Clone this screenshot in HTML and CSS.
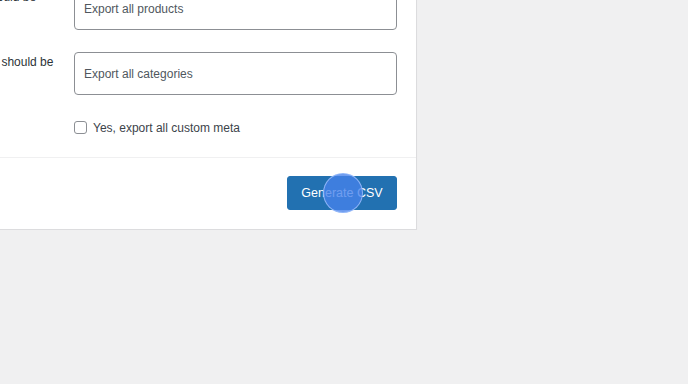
FILE: index.html
```html
<!DOCTYPE html>
<html lang="en">
<head>
<meta charset="utf-8">
<title>Export Products</title>
<link rel="stylesheet" href="styles.css">
</head>
<body>
<div class="card">
  <div class="form">
    <div class="row">
      <label class="label">Which product types should be exported?</label>
      <div class="field"><div class="select">Export all products</div></div>
    </div>
    <div class="row">
      <label class="label">Which product category should be exported?</label>
      <div class="field"><div class="select">Export all categories</div></div>
    </div>
    <div class="row row-check">
      <label class="label">Export custom meta?</label>
      <div class="field"><label class="check"><span class="box"></span>Yes, export all custom meta</label></div>
    </div>
  </div>
  <div class="footer">
    <div class="btn-wrap">
      <button class="button">Generate CSV</button>
      <span class="click"></span>
    </div>
  </div>
</div>
</body>
</html>
```

FILE: styles.css
```css
html, body {
  margin: 0;
  padding: 0;
  background: #f0f0f1;
  font-family: "Liberation Sans", Arial, sans-serif;
  color: #1d2327;
}
.card {
  background: #fff;
  margin-top: -13px;
  margin-left: -140px;
  width: 556px;
  border-right: 1px solid #dcdcde;
  border-bottom: 1px solid #dcdcde;
  box-shadow: 0 1px 1px rgba(0,0,0,0.04);
}
.form {
  padding: 0 19px 0 12px;
  display: flex;
  flex-direction: column;
}
.row {
  display: grid;
  grid-template-columns: 190px 1fr;
  column-gap: 12px;
  margin-bottom: 22px;
}
.row-check {
  margin-top: 3px;
  margin-bottom: 21px;
}
.label {
  font-size: 12px;
  line-height: 15.6px;
  padding-top: 3px;
  color: #2c3338;
}
.row-check .label { padding-top: 0; }
.select {
  height: 43px;
  box-sizing: border-box;
  border: 1px solid #8c8f94;
  border-radius: 4px;
  padding: 0 9px;
  display: flex;
  align-items: center;
  font-size: 12px;
  color: #50575e;
}
.check {
  display: flex;
  align-items: center;
  font-size: 12px;
  color: #3c434a;
  height: 15px;
}
.box {
  width: 11px;
  height: 11px;
  border: 1px solid #8c8f94;
  border-radius: 3px;
  margin-right: 6px;
  background: #fff;
}
.footer {
  border-top: 1px solid #f0f0f1;
  padding: 18px 19px 19px;
  display: flex;
  justify-content: flex-end;
}
.btn-wrap {
  position: relative;
}
.button {
  display: block;
  width: 110px;
  height: 34px;
  background: #2271b1;
  border: 1px solid #2271b1;
  border-radius: 3px;
  color: #fff;
  font-family: "Liberation Sans", Arial, sans-serif;
  font-size: 12.5px;
  padding: 0;
}
.click {
  position: absolute;
  left: 36px;
  top: -3px;
  width: 40px;
  height: 40px;
  box-sizing: border-box;
  border-radius: 50%;
  background: rgba(70, 130, 235, 0.78);
  border: 1px solid rgba(150, 185, 250, 0.9);
}
```
